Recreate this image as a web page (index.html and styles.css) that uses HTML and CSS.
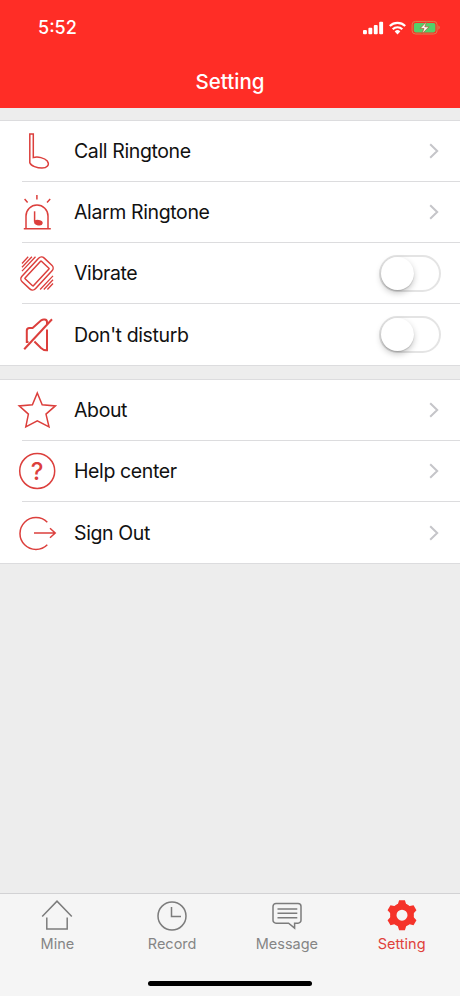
FILE: index.html
```html
<!DOCTYPE html>
<html lang="en">
  <head>
    <meta charset="UTF-8" />
    <meta name="viewport" content="width=device-width, initial-scale=1.0" />
    <title>Setting</title>
    <link rel="stylesheet" href="styles.css">
  </head>
  <body>
    <header class="header">
      <div class="status-bar">
        <span class="time">5:52</span>
        <svg class="status-icons" width="80" height="16" viewBox="0 0 80 16">
          <g fill="#fff">
            <rect x="1" y="10" width="3.9" height="4.2" rx="1" />
            <rect x="6.4" y="7.8" width="3.9" height="6.4" rx="1" />
            <rect x="11.8" y="5" width="3.9" height="9.2" rx="1" />
            <rect x="17.2" y="1.8" width="3.9" height="12.4" rx="1" />
            <path d="M35.5 14.4l-2.8-3a4 4 0 0 1 5.6 0z" />
          </g>
          <g fill="none" stroke="#fff" stroke-width="2.2">
            <path d="M27.8 6a11 11 0 0 1 15.4 0" />
            <path d="M30.7 9.2a6.9 6.9 0 0 1 9.6 0" />
          </g>
          <rect x="50.1" y="1.4" width="25" height="12.6" rx="3.4" fill="none" stroke="#d9814f" />
          <rect x="51.8" y="3" width="21.6" height="9.4" rx="1.8" fill="#53d06a" />
          <path d="M76.4 5.5a2.3 2.3 0 0 1 0 4.200z" fill="#d9814f" />
          <path d="M64.6 1.8l-6.400 6.600h3.800l-2 5.400 7-7h-4.200z" fill="#fff" stroke="#b4552c" stroke-width=".7" />
        </svg>
      </div>
      <h1 class="title">Setting</h1>
    </header>

    <main class="content">
      <ul class="group">
        <li class="row">
          <svg class="icon" viewBox="0 0 40 40">
            <path d="M12.8 3h3.5v23.600c4.500-1.300 11.200.2 14 3.500 2.700 3.700-.4 7-5.300 7-4.800 0-11.100-2.200-12.200-5.400z" />
          </svg>
          <span class="label">Call Ringtone</span>
          <svg class="chevron" viewBox="0 0 10 16"><path d="M1.2 1.2L8.2 8l-7 6.8" /></svg>
        </li>
        <li class="row">
          <svg class="icon" viewBox="0 0 40 40">
            <path d="M7.6 7l3 3.4M19.9 3v4.6M33.2 7l-3.2 3.4" />
            <path d="M9 36.7V24a11 11 0 0 1 22 0v12.700M6.800 36.700h27" />
            <path d="M17.600 19.300v10.500" />
            <ellipse class="solid" cx="21.400" cy="30.700" rx="3.600" ry="2" transform="rotate(12 21.400 30.700)" />
          </svg>
          <span class="label">Alarm Ringtone</span>
          <svg class="chevron" viewBox="0 0 10 16"><path d="M1.2 1.2L8.2 8l-7 6.8" /></svg>
        </li>
        <li class="row">
          <svg class="icon" viewBox="0 0 40 40">
            <g transform="rotate(43 20 20.5)">
              <rect x="10.8" y="4.300" width="18.400" height="32.400" rx="4" />
              <rect x="14.300" y="8.500" width="11.400" height="24" rx=".6" />
            </g>
            <g class="waves">
              <path d="M5 10.500l6.200-6.700M5 14.300L14.900 3.800M5 18.100L18.500 3.800" />
              <path d="M36 30.500l-5.600 6M36 26.700L26.800 36.500M36 22.900L23.100 36.500" />
            </g>
          </svg>
          <span class="label">Vibrate</span>
          <span class="switch"></span>
        </li>
        <li class="row">
          <svg class="icon bold" viewBox="0 0 40 40">
            <path d="M7.200 34.200L35 4.200" />
            <path d="M11.500 27h-1.700V15.500c0-2 1-2.600 2.600-2.600h3.200l8.600-7.600c1.600-1 5.800-1.400 5.800 1.600v2" />
            <path d="M30 14.500v20.800c-1.800.2-4-.6-6-2.400l-6.600-6.400" />
          </svg>
          <span class="label">Don't disturb</span>
          <span class="switch"></span>
        </li>
      </ul>

      <ul class="group">
        <li class="row">
          <svg class="icon" viewBox="0 0 40 40">
            <path d="M20.300 3l4.900 11.800 13.100 1.100-9.300 8.200 3 12.700-11.700-6-11.500 6 2.600-12.700-9.200-8.200 13.200-1.100z" />
          </svg>
          <span class="label">About</span>
          <svg class="chevron" viewBox="0 0 10 16"><path d="M1.2 1.2L8.2 8l-7 6.8" /></svg>
        </li>
        <li class="row">
          <svg class="icon" viewBox="0 0 40 40">
            <circle cx="20.200" cy="20" r="17.500" />
            <text class="question" x="20" y="28.600" text-anchor="middle">?</text>
          </svg>
          <span class="label">Help center</span>
          <svg class="chevron" viewBox="0 0 10 16"><path d="M1.2 1.2L8.2 8l-7 6.8" /></svg>
        </li>
        <li class="row">
          <svg class="icon" viewBox="0 0 40 40">
            <path d="M30.300 9.200a16 16 0 1 0 0 22.600" />
            <path d="M17 20h21M33 15.300l5.200 4.700-5.200 4.700" />
          </svg>
          <span class="label">Sign Out</span>
          <svg class="chevron" viewBox="0 0 10 16"><path d="M1.2 1.2L8.2 8l-7 6.8" /></svg>
        </li>
      </ul>
    </main>

    <footer class="tab-bar">
      <nav class="tabs">
        <a class="tab">
          <svg class="tab-icon" viewBox="0 0 32 32">
            <path d="M1.200 17.500L16 2.200l14.800 15.300M5.800 18.500v11.400h20.400V18.500" />
          </svg>
          <span>Mine</span>
        </a>
        <a class="tab">
          <svg class="tab-icon" viewBox="0 0 32 32">
            <circle cx="16" cy="17" r="14" />
            <path d="M15.500 8v9.500H25" />
          </svg>
          <span>Record</span>
        </a>
        <a class="tab">
          <svg class="tab-icon" viewBox="0 0 32 32">
            <path d="M5 4.500h22a3 3 0 0 1 3 3v13.700a3 3 0 0 1-3 3h-3.400v5l-6-5H5a3 3 0 0 1-3-3V7.500a3 3 0 0 1 3-3z" />
            <path d="M6.500 10h19.800M6.500 14.300h19.800M6.500 18.700h19.800" />
          </svg>
          <span>Message</span>
        </a>
        <a class="tab active">
          <svg class="tab-icon" viewBox="0 0 32 32">
            <g class="gear">
              <circle cx="16" cy="16.200" r="8.700" />
              <path d="M11.600 6l1.500-4.800h5.800L20.400 6zM11.600 26.400l1.500 4.800h5.800l1.500-4.800z" />
              <path d="M11.600 6l1.500-4.800h5.800L20.400 6zM11.600 26.400l1.500 4.800h5.800l1.500-4.800z" transform="rotate(60 16 16.200)" />
              <path d="M11.600 6l1.500-4.800h5.800L20.400 6zM11.600 26.400l1.500 4.800h5.800l1.500-4.800z" transform="rotate(120 16 16.200)" />
            </g>
          </svg>
          <span>Setting</span>
        </a>
      </nav>
      <div class="home-indicator"></div>
    </footer>
  </body>
</html>
```

FILE: styles.css
```css
* {
  margin: 0;
  padding: 0;
  box-sizing: border-box;
}

body {
  display: flex;
  flex-direction: column;
  height: 100vh;
  background: #ededed;
  color: #111;
  font-family: "Inter", "Liberation Sans", sans-serif;
  overflow: hidden;
}

.header {
  height: 108px;
  background: #ff2d26;
  color: #fff;
}

.status-bar {
  display: flex;
  justify-content: space-between;
  align-items: center;
  height: 55px;
  padding: 0 18px 0 38px;
}

.time {
  font-size: 18px;
  font-weight: 500;
}

.title {
  font-size: 20.5px;
  font-weight: 500;
  line-height: 53px;
  text-align: center;
}

.content {
  display: flex;
  flex: 1;
  flex-direction: column;
  gap: 13px;
  padding-top: 12px;
}

.group {
  list-style: none;
  background: #fff;
  border-top: 1px solid #dcdcde;
  border-bottom: 1px solid #dcdcde;
}

.row {
  display: flex;
  align-items: center;
  height: 61px;
  margin-left: 22px;
  padding-right: 19px;
  border-bottom: 1px solid #dcdcde;
}

.row:last-child {
  height: 61px;
  border-bottom: none;
}

.icon {
  width: 40px;
  height: 40px;
  margin: 0 17px 0 -5px;
  fill: none;
  stroke: #dc3f3c;
  stroke-width: 1.5;
}

.icon.bold {
  stroke-width: 2;
}

.icon .waves {
  stroke-width: 1.3;
}

.icon .solid {
  fill: #dc3f3c;
}

.icon .question {
  fill: #dc3f3c;
  stroke: none;
  font-size: 24px;
  font-weight: 500;
}

.label {
  flex: 1;
  font-size: 19.5px;
  letter-spacing: -0.38px;
}

.chevron {
  width: 10px;
  height: 16px;
  margin-right: 2px;
  fill: none;
  stroke: #c5c5c9;
  stroke-width: 2;
}

.switch {
  width: 62px;
  height: 37px;
  border: 2px solid #e4e4e4;
  border-radius: 19px;
}

.switch::before {
  content: "";
  display: block;
  width: 33px;
  height: 33px;
  border-radius: 50%;
  background: #fff;
  box-shadow: 0 3px 6px rgba(0, 0, 0, 0.22), 0 1px 1px rgba(0, 0, 0, 0.15);
}

.tab-bar {
  height: 103px;
  background: #f5f5f5;
  border-top: 1px solid #d2d2d4;
}

.tabs {
  display: flex;
  height: 87px;
  padding: 5px 1px 0 0;
}

.tab {
  display: flex;
  flex: 1;
  flex-direction: column;
  align-items: center;
  color: #858585;
  font-size: 14.5px;
  line-height: 20px;
}

.tab-icon {
  width: 32px;
  height: 32px;
  margin-bottom: 3px;
  fill: none;
  stroke: #7c7c7c;
  stroke-width: 1.5;
}

.tab.active {
  color: #e0413b;
}

.gear {
  fill: none;
  stroke: none;
}

.gear circle {
  stroke: #f5332a;
  stroke-width: 6.4;
}

.gear path {
  fill: #f5332a;
}

.home-indicator {
  width: 164px;
  height: 5px;
  margin: 0 auto;
  border-radius: 3px;
  background: #000;
}
```
